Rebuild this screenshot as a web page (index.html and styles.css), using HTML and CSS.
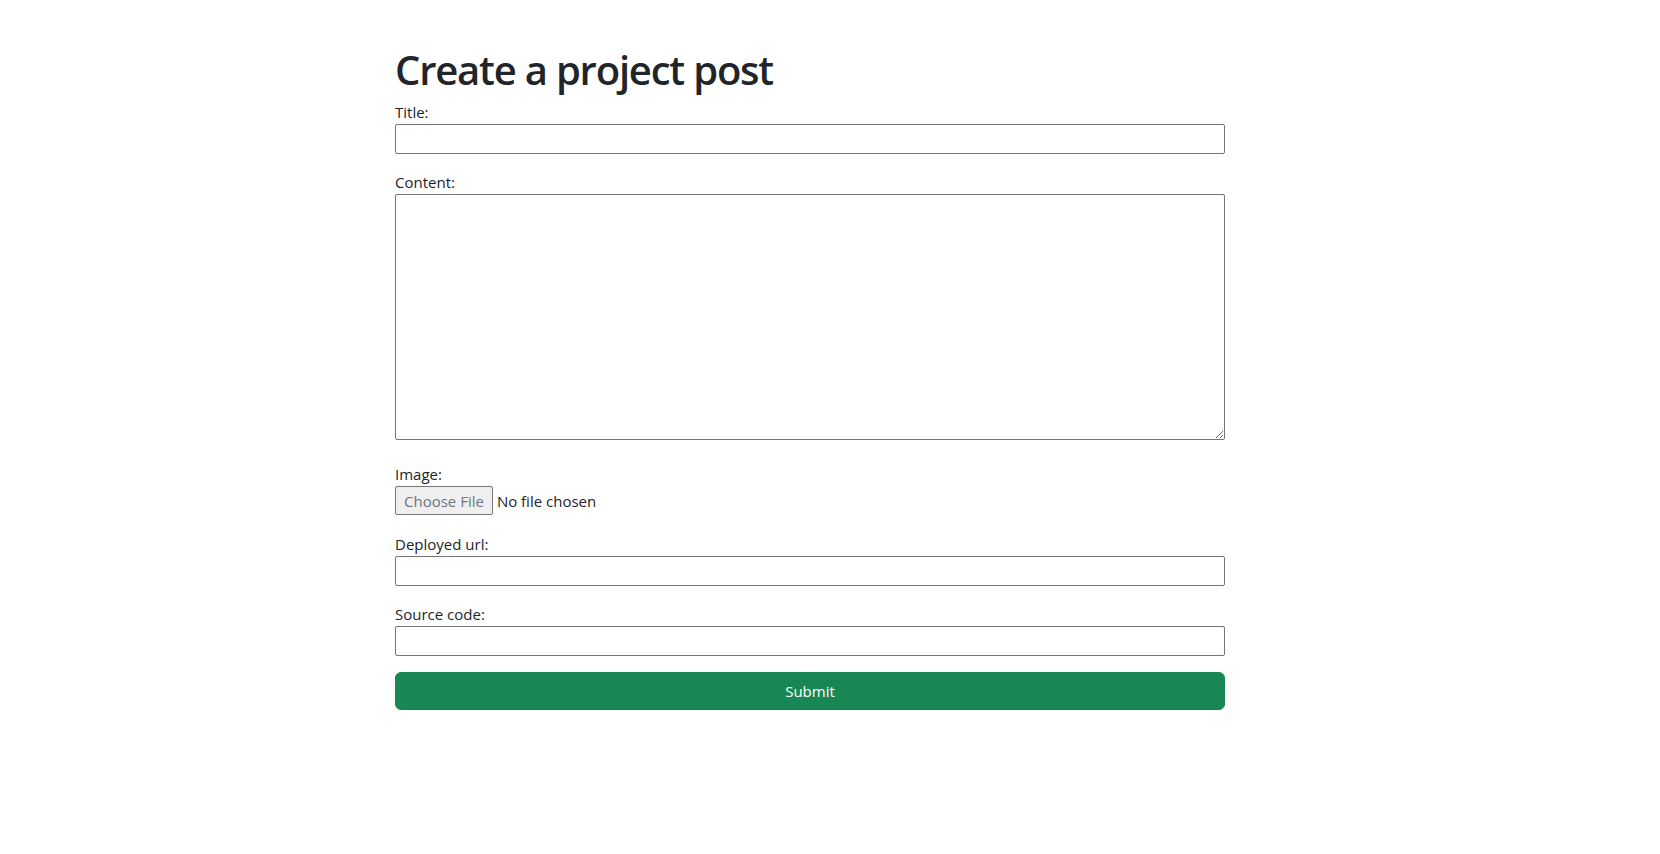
FILE: index.html
```html
<!DOCTYPE html>
<html lang="en">
<head>
<meta charset="utf-8">
<title>Create a project post</title>
<link rel="stylesheet" href="styles.css">
</head>
<body>
<main class="page">
  <form class="post-form">
    <h1 class="heading">Create a project post</h1>
    <div class="field">
      <label class="label" for="title">Title:</label>
      <input class="text-input" id="title" type="text">
    </div>
    <div class="field field-tall">
      <label class="label" for="content">Content:</label>
      <textarea class="text-area" id="content"></textarea>
    </div>
    <div class="field">
      <label class="label" for="image">Image:</label>
      <input class="file-input" id="image" type="file">
    </div>
    <div class="field">
      <label class="label" for="url">Deployed url:</label>
      <input class="text-input" id="url" type="text">
    </div>
    <div class="field">
      <label class="label" for="source">Source code:</label>
      <input class="text-input" id="source" type="text">
    </div>
    <button class="submit" type="submit">Submit</button>
  </form>
</main>
</body>
</html>
```

FILE: styles.css
```css
* { box-sizing: border-box; }
html, body { margin: 0; padding: 0; background: #fff; }
body {
  font-family: "Open Sans", "Noto Sans", sans-serif;
  font-size: 16px;
  line-height: 1.5;
  color: #212529;
}
.page {
  padding-top: 46px;
  padding-left: calc(50% - 435px);
}
.post-form {
  width: 830px;
}
.heading {
  margin: 0 0 6px 0;
  font-size: 40px;
  font-weight: 600;
  line-height: 48px;
  letter-spacing: -1.2px;
}
.field {
  margin-bottom: 16px;
}
.field-tall {
  margin-bottom: 22px;
}
.label {
  display: block;
  height: 24px;
  line-height: 24px;
  font-size: 15px;
}
.text-input {
  display: block;
  width: 100%;
  height: 30px;
  border: 1px solid #767676;
  border-radius: 2px;
  font: inherit;
  padding: 1px 2px;
  background: #fff;
}
.text-area {
  display: block;
  width: 100%;
  height: 246px;
  border: 1px solid #767676;
  border-radius: 2px;
  font: inherit;
  padding: 2px;
}
.file-input {
  display: block;
  height: 30px;
  font-family: inherit;
  font-size: 15px;
  color: #212529;
}
.file-input::file-selector-button {
  height: 29px;
  font-family: inherit;
  font-size: 15px;
  color: #6c757d;
  background: #efefef;
  border: 1px solid #767676;
  border-radius: 2px;
  padding: 0 8px;
  margin-right: 4px;
}
.submit {
  display: block;
  width: 100%;
  height: 38px;
  border: 1px solid #198754;
  border-radius: 6px;
  background: #198754;
  color: #fff;
  font-family: inherit;
  font-size: 15px;
}
```
